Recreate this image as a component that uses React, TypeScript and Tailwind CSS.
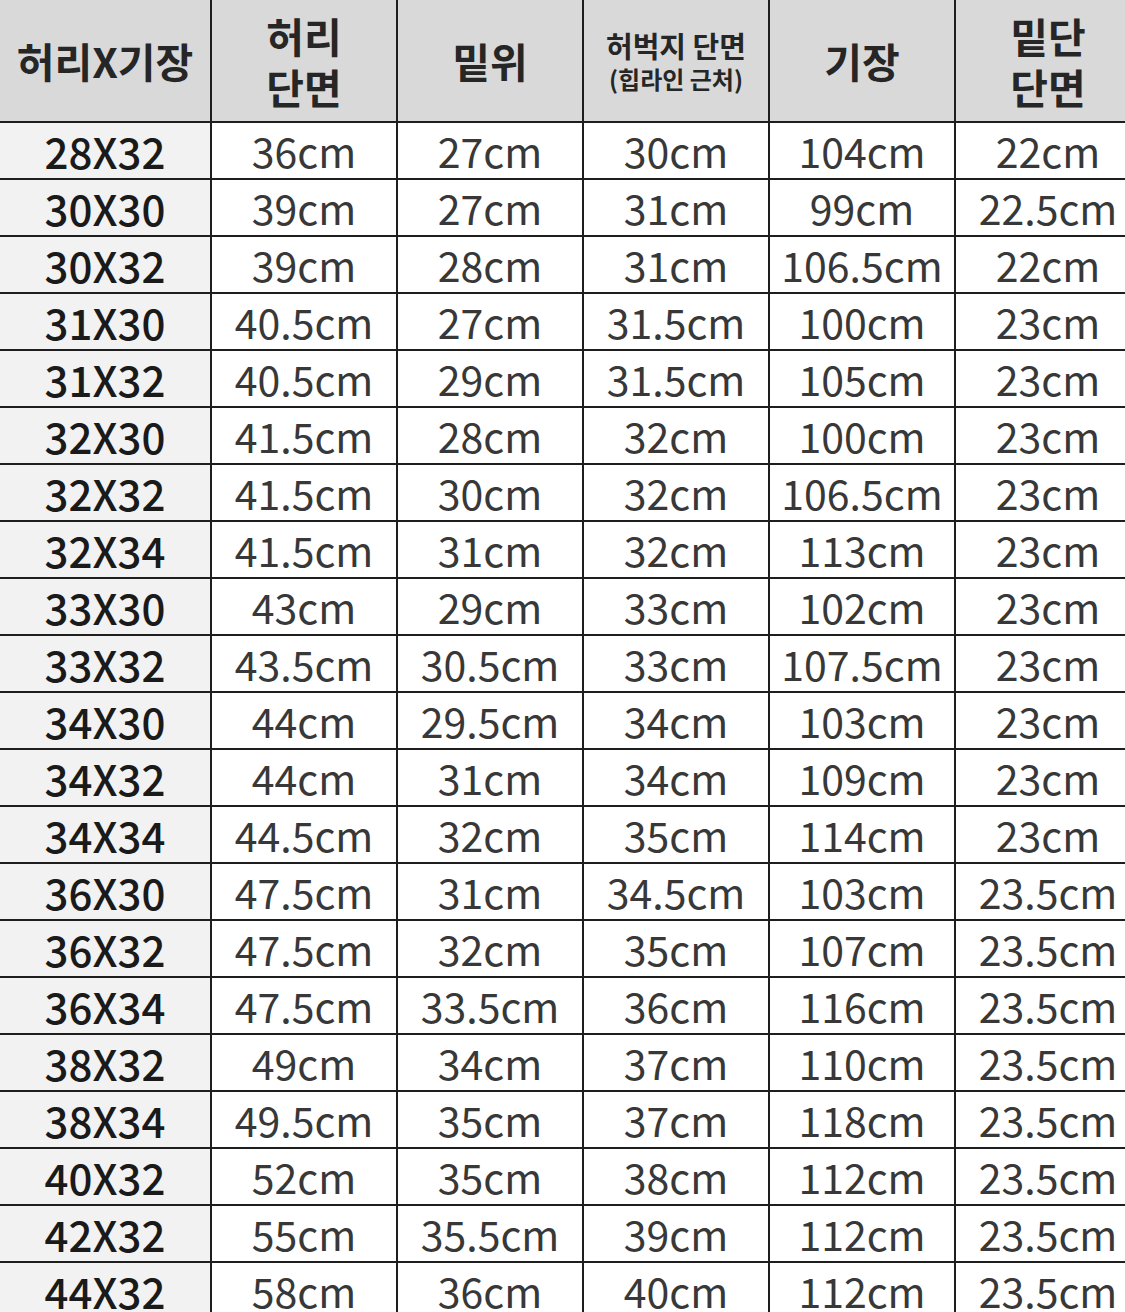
import React from "react";

const rows: string[][] = [
  ["28X32", "36cm", "27cm", "30cm", "104cm", "22cm"],
  ["30X30", "39cm", "27cm", "31cm", "99cm", "22.5cm"],
  ["30X32", "39cm", "28cm", "31cm", "106.5cm", "22cm"],
  ["31X30", "40.5cm", "27cm", "31.5cm", "100cm", "23cm"],
  ["31X32", "40.5cm", "29cm", "31.5cm", "105cm", "23cm"],
  ["32X30", "41.5cm", "28cm", "32cm", "100cm", "23cm"],
  ["32X32", "41.5cm", "30cm", "32cm", "106.5cm", "23cm"],
  ["32X34", "41.5cm", "31cm", "32cm", "113cm", "23cm"],
  ["33X30", "43cm", "29cm", "33cm", "102cm", "23cm"],
  ["33X32", "43.5cm", "30.5cm", "33cm", "107.5cm", "23cm"],
  ["34X30", "44cm", "29.5cm", "34cm", "103cm", "23cm"],
  ["34X32", "44cm", "31cm", "34cm", "109cm", "23cm"],
  ["34X34", "44.5cm", "32cm", "35cm", "114cm", "23cm"],
  ["36X30", "47.5cm", "31cm", "34.5cm", "103cm", "23.5cm"],
  ["36X32", "47.5cm", "32cm", "35cm", "107cm", "23.5cm"],
  ["36X34", "47.5cm", "33.5cm", "36cm", "116cm", "23.5cm"],
  ["38X32", "49cm", "34cm", "37cm", "110cm", "23.5cm"],
  ["38X34", "49.5cm", "35cm", "37cm", "118cm", "23.5cm"],
  ["40X32", "52cm", "35cm", "38cm", "112cm", "23.5cm"],
  ["42X32", "55cm", "35.5cm", "39cm", "112cm", "23.5cm"],
  ["44X32", "58cm", "36cm", "40cm", "112cm", "23.5cm"],
];

const cell = "flex items-center justify-center border-r-2 border-b-2 border-[#1e1e1e] text-center whitespace-nowrap";
const head = `${cell} h-[123px] bg-[#d9d9d9] font-bold text-[#262626]`;

export default function App() {
  return (
    <div className="w-[1125px] h-[1312px] overflow-hidden bg-white font-['Noto_Sans_CJK_KR',sans-serif]">
      <div className="grid grid-cols-[212px_186px_186px_186px_186px_186px] w-[1142px]">
        {/* header */}
        <div className={`${head} text-[41px]`}>허리X기장</div>
        <div className={`${head} flex-col gap-[9px] text-[41px] leading-[42px]`}>
          <span>허리</span>
          <span>단면</span>
        </div>
        <div className={`${head} text-[41px]`}>밑위</div>
        <div className={`${head} flex-col gap-[6px]`}>
          <span className="text-[29px] leading-[30px]">허벅지 단면</span>
          <span className="text-[24px] leading-[26px]">(힙라인 근처)</span>
        </div>
        <div className={`${head} text-[41px]`}>기장</div>
        <div className={`${head} flex-col gap-[9px] text-[41px] leading-[42px]`}>
          <span>밑단</span>
          <span>단면</span>
        </div>

        {rows.map((r) =>
          r.map((v, i) => (
            <div
              key={r[0] + i}
              className={
                i === 0
                  ? `${cell} h-[57px] bg-[#f2f2f2] text-[42px] font-medium text-[#1a1a1a]`
                  : `${cell} h-[57px] bg-white text-[41px] text-[#383838]`
              }
            >
              {v}
            </div>
          ))
        )}
      </div>
    </div>
  );
}
